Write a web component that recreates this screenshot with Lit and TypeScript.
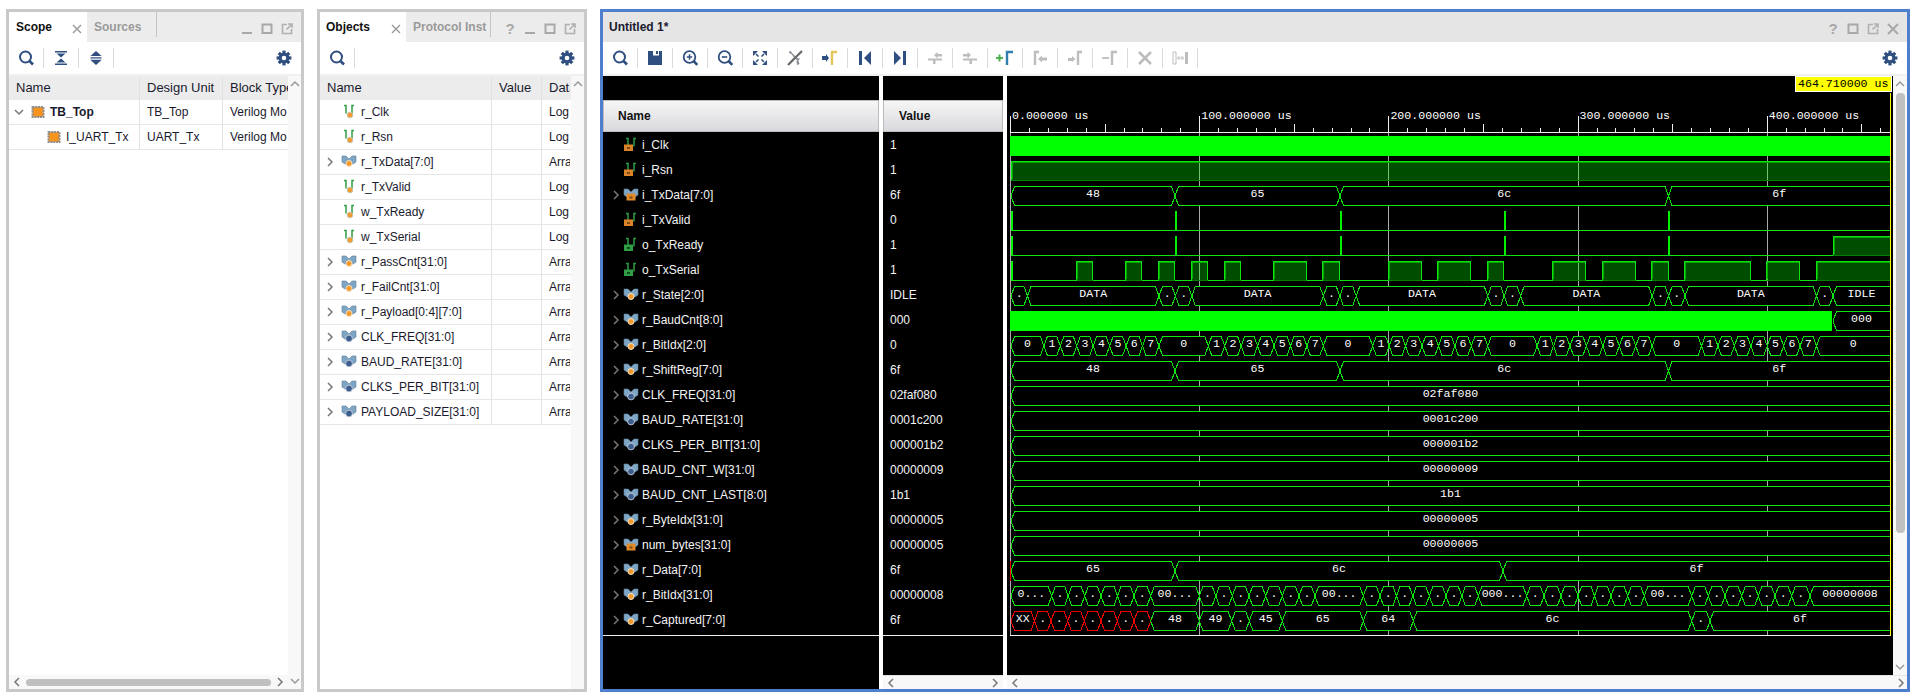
import { LitElement, css, html, svg } from "lit";
import { customElement } from "lit/decorators.js";

type Seg = [number, string];
type Kind = "log" | "arr" | "con" | "in" | "inarr" | "out" | "chip";

const NAVY = "#2f4f80";
const GREY = "#bdbdbd";
const GREEN = "#10e410";

const icon = (body: unknown, size = 20) =>
  html`<svg width=${size} height=${size} viewBox="0 0 20 20" fill="none">${body}</svg>`;

const search = svg`<circle cx="9.5" cy="9" r="5.5" stroke=${NAVY} stroke-width="2"/><path d="M13.5 13l3.5 3.5" stroke=${NAVY} stroke-width="2.6"/>`;

const gear = () => {
  const teeth = [0, 45, 90, 135, 180, 225, 270, 315].map(
    (a) => svg`<rect x="8.4" y="2.6" width="3.2" height="4" fill=${NAVY} transform="rotate(${a} 10 10)"/>`
  );
  return icon(svg`${teeth}<circle cx="10" cy="10" r="5.4" fill=${NAVY}/><circle cx="10" cy="10" r="2.3" fill="#fff"/>`);
};

const tools: Record<string, unknown> = {
  search,
  collapse: svg`<path d="M4 3h12v1.6H4zM4 15.4h12V17H4zM10 9.5L5.5 5.5h9zM10 10.5l4.5 4h-9z" fill=${NAVY}/>`,
  expand: svg`<path d="M10 3l5.5 5h-11zM10 17l-5.5-5h11zM4.5 9h11v.8h-11zM4.5 10.4h11v.8h-11z" fill=${NAVY}/>`,
  save: svg`<path d="M3 3h14v14H3z" fill=${NAVY}/><rect x="8" y="3" width="6" height="4.5" fill="#fff"/><rect x="11" y="3" width="2" height="3" fill=${NAVY}/>`,
  zoomIn: svg`<circle cx="9.5" cy="9" r="5.8" stroke=${NAVY} stroke-width="1.8"/><path d="M13.5 13l3.8 3.8" stroke=${NAVY} stroke-width="2.6"/><path d="M6.8 9h5.4M9.5 6.3v5.4" stroke=${NAVY} stroke-width="1.5"/>`,
  zoomOut: svg`<circle cx="9.5" cy="9" r="5.8" stroke=${NAVY} stroke-width="1.8"/><path d="M13.5 13l3.8 3.8" stroke=${NAVY} stroke-width="2.6"/><path d="M6.8 9h5.4" stroke=${NAVY} stroke-width="1.6"/>`,
  fit: svg`<path d="M3 3h5L3 8zM17 3v5l-5-5zM3 17v-5l5 5zM17 17h-5l5-5z" fill=${NAVY}/><path d="M6 6l2.5 2.5M14 6l-2.5 2.5M6 14l2.5-2.5M14 14l-2.5-2.5" stroke=${NAVY} stroke-width="1.5"/>`,
  swap: svg`<path d="M4 4c4 2 8 6 10 12M4 16l4-5M5 3l5 7 4 1-2 3 1 3" stroke="#8a8f99" stroke-width="1.2"/><path d="M3 17L17 3" stroke="#666" stroke-width="2.2"/>`,
  goCursor: svg`<path d="M2 8h4V6l3 4-3 4v-2H2z" fill=${NAVY}/><path d="M12 17V4h5" stroke="#e3c65a" stroke-width="2.4"/>`,
  first: svg`<rect x="4" y="3" width="3" height="14" fill=${NAVY}/><path d="M16 3v14L9 10z" fill=${NAVY}/>`,
  last: svg`<rect x="13" y="3" width="3" height="14" fill=${NAVY}/><path d="M4 3v14l7-7z" fill=${NAVY}/>`,
  prevT: svg`<path d="M9 7l3.5-3v2H17v2.5h-4.5v2zM3 10.5h14v2H10.5V16H8v-3.500H3z" fill=${GREY}/>`,
  nextT: svg`<path d="M11 7L7.500 4v2H3v2.500h4.500v2zM3 10.500h14v2h-5V16H9.500v-3.500H3z" fill=${GREY}/>`,
  addM: svg`<path d="M1 10h7M4.5 6.5v7" stroke="#4caf50" stroke-width="2"/><path d="M12 17V4h6" stroke="#2f7fb0" stroke-width="2.4"/>`,
  prevM: svg`<path d="M5 17V4h4" stroke=${GREY} stroke-width="2.4"/><path d="M8 11l4-3.5v2h5v3h-5v2z" fill=${GREY}/>`,
  nextM: svg`<path d="M3 10h4V8l3.5 3L7 14v-1H3z" fill=${GREY}/><path d="M13 17V4h4" stroke=${GREY} stroke-width="2.4"/>`,
  delM: svg`<path d="M2 10h7" stroke=${GREY} stroke-width="1.8"/><path d="M12 17V4h5" stroke=${GREY} stroke-width="2.4"/>`,
  clear: svg`<path d="M4 4l12 12M16 4L4 16" stroke=${GREY} stroke-width="2.6"/>`,
  dist: svg`<path d="M3 4h3v12H3z" stroke=${GREY}/><rect x="15" y="4" width="3" height="12" fill=${GREY}/><path d="M7.5 10h6M7.5 10l2-2M7.5 10l2 2M13.5 10l-2-2M13.5 10l-2 2" stroke=${GREY}/>`,
};

const funnel = svg`<path d="M1 2h4l3 3 3-3h4v6l-3 2H4L1 8z" fill="#7ea6c4" stroke="#5e7f9c" stroke-width=".6"/>`;
const twin = (c: string) => svg`<path d="M3 1.5h2v8M11 9.5V1.5h2" stroke=${c} stroke-width="1.5"/>`;

const kinds: Record<Kind, unknown> = {
  chip: svg`<path d="M2.500 3h11v10h-11z" fill="#f7941d" stroke="#8c8c8c" stroke-width="2" stroke-dasharray="2 .8"/>`,
  log: svg`${twin("#2f9e44")}<circle cx="9" cy="11" r="2.8" fill="#f29a2e" stroke="#c9c2a8"/>`,
  arr: svg`${funnel}<circle cx="8" cy="9.5" r="3" fill="#f29a2e" stroke="#f7e3c5"/>`,
  con: svg`${funnel}<circle cx="8" cy="9.5" r="3.4" fill="#3d5f8f" stroke="#d5dce6" stroke-width=".8"/>`,
  in: svg`${twin("#2f9e44")}<rect x="1" y="7.5" width="9" height="6.5" fill="#d98428"/><rect x="4" y="10" width="3" height="2" fill="#7d4a14"/>`,
  inarr: svg`${funnel}<rect x="3.5" y="6.5" width="9" height="7" fill="#e08a2a"/><rect x="6.5" y="9.5" width="3" height="2" fill="#7d4a14"/>`,
  out: svg`${twin("#2f9e44")}<rect x="1" y="7.5" width="9" height="6.5" fill="#2f9e44"/><rect x="4" y="10" width="3" height="2" fill="#0c4d1a"/>`,
};

const kindIcon = (k: Kind) =>
  html`<svg class="ki" width="16" height="16" viewBox="0 0 16 16" fill="none">${kinds[k]}</svg>`;

const chevron = (dir: "right" | "down" | "left" | "up", c = "#777") => {
  const d = {
    right: "M3 1l4 4-4 4",
    left: "M7 1L3 5l4 4",
    down: "M1 3l4 4 4-4",
    up: "M1 7l4-4 4 4",
  }[dir];
  return html`<svg width="10" height="10" viewBox="0 0 10 10" fill="none"><path d=${d} stroke=${c} stroke-width="1.5"/></svg>`;
};

const ctrl = {
  help: html`<span class="help">?</span>`,
  min: html`<svg width="20" height="20" viewBox="0 0 20 20"><rect x="5" y="13" width="10" height="2" fill="#a8a8a8"/></svg>`,
  max: html`<svg width="20" height="20" viewBox="0 0 20 20" fill="none"><rect x="5.5" y="5.5" width="9" height="8.5" stroke="#a8a8a8" stroke-width="2"/></svg>`,
  pop: html`<svg width="20" height="20" viewBox="0 0 20 20" fill="none"><path d="M10 5.500H5.500V14.500H14.500V10M9.500 10.500L14.500 5.500M11 5h4v4" stroke="#b0b0b0" stroke-width="1.6"/></svg>`,
  close: html`<svg width="20" height="20" viewBox="0 0 20 20" fill="none"><path d="M5 5l10 10M15 5L5 15" stroke="#a8a8a8" stroke-width="2"/></svg>`,
};

const closeTab = html`<svg width="10" height="10" viewBox="0 0 10 10"><path d="M1 1l8 8M9 1L1 9" stroke="#999" stroke-width="1.4"/></svg>`;

const objects: [string, Kind, string][] = [
  ["r_Clk", "log", "Log"],
  ["r_Rsn", "log", "Log"],
  ["r_TxData[7:0]", "arr", "Arra"],
  ["r_TxValid", "log", "Log"],
  ["w_TxReady", "log", "Log"],
  ["w_TxSerial", "log", "Log"],
  ["r_PassCnt[31:0]", "arr", "Arra"],
  ["r_FailCnt[31:0]", "arr", "Arra"],
  ["r_Payload[0:4][7:0]", "arr", "Arra"],
  ["CLK_FREQ[31:0]", "con", "Arra"],
  ["BAUD_RATE[31:0]", "con", "Arra"],
  ["CLKS_PER_BIT[31:0]", "con", "Arra"],
  ["PAYLOAD_SIZE[31:0]", "con", "Arra"],
];

const signals: [string, Kind, string][] = [
  ["i_Clk", "in", "1"],
  ["i_Rsn", "in", "1"],
  ["i_TxData[7:0]", "inarr", "6f"],
  ["i_TxValid", "in", "0"],
  ["o_TxReady", "out", "1"],
  ["o_TxSerial", "out", "1"],
  ["r_State[2:0]", "arr", "IDLE"],
  ["r_BaudCnt[8:0]", "arr", "000"],
  ["r_BitIdx[2:0]", "arr", "0"],
  ["r_ShiftReg[7:0]", "arr", "6f"],
  ["CLK_FREQ[31:0]", "con", "02faf080"],
  ["BAUD_RATE[31:0]", "con", "0001c200"],
  ["CLKS_PER_BIT[31:0]", "con", "000001b2"],
  ["BAUD_CNT_W[31:0]", "con", "00000009"],
  ["BAUD_CNT_LAST[8:0]", "con", "1b1"],
  ["r_ByteIdx[31:0]", "arr", "00000005"],
  ["num_bytes[31:0]", "inarr", "00000005"],
  ["r_Data[7:0]", "arr", "6f"],
  ["r_BitIdx[31:0]", "arr", "00000008"],
  ["r_Captured[7:0]", "arr", "6f"],
];

// waveform geometry, in page pixels
const X0 = 1011;
const XE = 1890;
const BIT = 16.44;
const FRAME = 164.4;
const rowTop = (i: number) => 136 + i * 25;
const frames = [0, 1, 2, 3, 4].map((k) => X0 + k * FRAME);

const bytes: Seg[] = [[X0, "48"], [1175, "65"], [1340, "6c"], [1668.5, "6f"]];

const stateSegs = (): Seg[] => {
  const out: Seg[] = [];
  frames.forEach((f) => {
    out.push([f, "."], [f + BIT, "DATA"], [f + 9 * BIT, "."]);
  });
  out.push([1833, "IDLE"]);
  return out;
};

const bitSegs = (): Seg[] => {
  const out: Seg[] = [[X0, "0"]];
  frames.forEach((f) => {
    for (let i = 0; i < 7; i++) out.push([f + 2 * BIT + i * BIT, String(i + 1)]);
    out.push([f + 9 * BIT, "0"]);
  });
  return out;
};

const dots = (xs: number[]): Seg[] => xs.map((x) => [x, "."] as Seg);

const idxSegs: Seg[] = [
  [X0, "0..."],
  ...dots([1051.7, 1068.2, 1084.7, 1101, 1117.5, 1134]),
  [1150.7, "00..."],
  ...dots([1199.3, 1215.8, 1232.3, 1249, 1265.7, 1282.3, 1299]),
  [1315, "00..."],
  ...dots([1363.3, 1380, 1396.5, 1412.8, 1429.3, 1446, 1461.8]),
  [1478.3, "000..."],
  ...dots([1526.7, 1544, 1561, 1578, 1594.5, 1611, 1627.7]),
  [1644.3, "00..."],
  ...dots([1691.7, 1708.3, 1725, 1741.7, 1758.3, 1775, 1791.7]),
  [1810, "00000008"],
];

const capSegs: Seg[] = [
  [X0, "XX"],
  ...dots([1034.5, 1051, 1067.7, 1084.3, 1101, 1117.3, 1134]),
  [1150.7, "48"],
  [1199.3, "49"],
  [1231.7, "."],
  [1249.3, "45"],
  [1282.3, "65"],
  [1363.3, "64"],
  [1413.3, "6c"],
  [1691.7, "."],
  [1710, "6f"],
];

const serialHigh: [number, number][] = [
  [1076.5, 1092.5], [1125.5, 1141.5], [1158.5, 1174.5], [1191.5, 1207.5], [1224.5, 1240.5],
  [1273.5, 1306.5], [1322.5, 1339.5], [1388.5, 1421.5], [1437.5, 1470.5], [1487.5, 1503.5],
  [1552.5, 1585.5], [1602.5, 1635.5], [1651.5, 1668.5], [1684.5, 1750.5], [1766.5, 1799.5],
  [1816.5, 1895],
];

const pulses = [1011.5, 1175.5, 1340.5, 1504.5, 1668.5];

const hexes = (row: number, segs: Seg[], redUntil = 0) => {
  const t = rowTop(row) + 0.5;
  const b = t + 19;
  const m = t + 9.5;
  const s = 3.5;
  return segs.map(([x0, label], i) => {
    const x1 = i + 1 < segs.length ? segs[i + 1][0] : XE + 8;
    const c = i < redUntil ? "#f00000" : GREEN;
    const cx = i + 1 < segs.length ? (x0 + x1) / 2 : (x0 + XE) / 2;
    return svg`<polygon class="bus" stroke=${c}
        points="${x0},${m} ${x0 + s},${t} ${x1 - s},${t} ${x1},${m} ${x1 - s},${b} ${x0 + s},${b}"/>
      <text class="val" x=${cx} y=${rowTop(row) + 11} text-anchor="middle">${label}</text>`;
  });
};

const high = (x0: number, x1: number, row: number) => {
  const t = rowTop(row);
  return svg`<rect class="hi" x=${x0} y=${t} width=${x1 - x0} height="19"/>
    <path class="edge" d="M${x0} ${t + 19}V${t + 0.5}H${x1}V${t + 19}"/>
    <path class="edge2" d="M${x0 + 1} ${t + 18}V${t + 1.5}H${x1 - 1}"/>
    <path class="low2" d="M${x0} ${t + 19.5}H${x1}"/>`;
};

const baseline = (row: number) =>
  svg`<path class="edge" d="M${X0} ${rowTop(row) + 19.5}H${XE}"/>`;

const stick = (x: number, row: number) =>
  svg`<rect x=${x - 0.5} y=${rowTop(row)} width="2" height="19" fill="#00f000"/>`;

@customElement("wave-view")
export class WaveView extends LitElement {
  render() {
    const majors = [0, 1, 2, 3, 4].map((k) => 1010.5 + k * 189.2);
    const minors: number[] = [];
    for (let i = 1; i * 18.92 < 878; i++) if (i % 10) minors.push(i);

    return html`<svg width="886" height="599" viewBox="1007 76 886 599">
      <defs><clipPath id="w"><rect x="1010" y="100" width="881" height="560"/></clipPath></defs>
      <rect x="1007" y="76" width="886" height="599" fill="#000"/>

      <!-- time axis -->
      <path class="axis" d="M1010 132.5H1890"/>
      ${majors.map(
        (x, k) => svg`<path class="axis" d="M${x} 116V132"/>
          <path class="grid" d="M${x} 133V635"/>
          <text class="val" x=${x + 1.5} y="119">${k * 100 === 0 ? "0.000000" : `${k * 100}.000000`} us</text>`
      )}
      ${minors.map((i) => {
        const x = Math.round(1010 + i * 18.92) + 0.5;
        return svg`<path class="axis" d="M${x} ${i % 5 ? 128 : 124}V132"/>`;
      })}
      <path class="axis" d="M1010 635.5H1890"/>

      <g clip-path="url(#w)">
        <rect x=${X0 - 1} y="136" width=${XE - X0 + 1} height="20" fill="#00ff00"/>
        ${high(X0, XE + 3, 1)}
        ${hexes(2, bytes)}
        ${baseline(3)}${pulses.map((x) => stick(x, 3))}
        ${baseline(4)}${pulses.map((x) => stick(x, 4))}${high(1833, XE + 3, 4)}
        ${baseline(5)}${stick(1011.5, 5)}${serialHigh.map(([a, b]) => high(a, b, 5))}
        ${hexes(6, stateSegs())}
        <rect x=${X0 - 1} y="311" width="822" height="20" fill="#00ff00"/>
        ${hexes(7, [[1833, "000"]])}
        ${hexes(8, bitSegs())}
        ${hexes(9, bytes)}
        ${hexes(10, [[X0, "02faf080"]])}
        ${hexes(11, [[X0, "0001c200"]])}
        ${hexes(12, [[X0, "000001b2"]])}
        ${hexes(13, [[X0, "00000009"]])}
        ${hexes(14, [[X0, "1b1"]])}
        ${hexes(15, [[X0, "00000005"]])}
        ${hexes(16, [[X0, "00000005"]])}
        ${hexes(17, [[X0, "65"], [1175, "6c"], [1503, "6f"]])}
        <path d="M1010.5 561V581" stroke="#f00000"/>
        ${hexes(18, idxSegs)}
        ${hexes(19, capSegs, 8)}
      </g>

      <!-- cursor -->
      <path d="M1890.5 93V636" stroke="#ffff00"/>
      <rect x="1795.5" y="76.5" width="96" height="15" fill="#ffff00" stroke="#fff"/>
      <text class="tag" x="1798" y="87">464.710000 us</text>
    </svg>`;
  }

  static styles = css`
    :host {
      display: block;
      width: 886px;
      height: 599px;
    }

    svg {
      display: block;
      shape-rendering: crispEdges;
    }

    .axis {
      stroke: #eee;
      fill: none;
    }

    .grid {
      stroke: #a8a8a8;
      fill: none;
    }

    .val,
    .tag {
      font-family: "Liberation Mono", monospace;
      font-size: 11.6px;
      fill: #fff;
    }

    .tag {
      fill: #000;
    }

    .bus {
      fill: #000;
      stroke-width: 1;
    }

    .hi {
      fill: #00ff00;
      fill-opacity: 0.3;
    }

    .edge {
      fill: none;
      stroke: #10e410;
    }

    .edge2 {
      fill: none;
      stroke: #00a800;
    }

    .low2 {
      fill: none;
      stroke: #008000;
    }
  `;
}

@customElement("app-root")
export class AppRoot extends LitElement {
  private hscroll() {
    return html`<div class="hbar h1">
      ${chevron("left")}<span class="thumb"></span>${chevron("right")}
    </div>`;
  }

  private vscroll(thumb = false, down = true) {
    return html`<div class="vbar">
      ${chevron("up", "#999")}
      ${thumb ? html`<span class="vthumb"></span>` : html`<span class="grow"></span>`}
      ${down ? chevron("down", "#999") : ""}
    </div>`;
  }

  private tree(name: string, kind: Kind, open: "none" | "right" | "down", extra = "") {
    return html`<div class="tree ${extra}">
      <span class="arrow">${open === "none" ? "" : chevron(open)}</span>
      ${kindIcon(kind)}
      <span class="label">${name}</span>
    </div>`;
  }

  private scopePanel() {
    return html`<section class="panel scope">
      <header class="tabs">
        <div class="tab on">Scope ${closeTab}</div>
        <div class="tab off">Sources</div>
        <span class="grow"></span>
        ${ctrl.min}${ctrl.max}${ctrl.pop}
      </header>
      <div class="toolbar">
        <span class="btn">${icon(tools.search)}</span>
        <span class="btn">${icon(tools.collapse)}</span>
        <span class="btn">${icon(tools.expand)}</span>
        <span class="grow"></span>
        <span class="gear">${gear()}</span>
      </div>
      <div class="body">
        <div class="main">
          <div class="table">
            <div class="row head"><span class="c1">Name</span><span class="c2">Design Unit</span><span class="c3">Block Type</span></div>
            <div class="row">
              <span class="c1 bold">${this.tree("TB_Top", "chip", "down")}</span>
              <span class="c2">TB_Top</span><span class="c3">Verilog Mo</span>
            </div>
            <div class="row">
              <span class="c1">${this.tree("I_UART_Tx", "chip", "none", "lv2")}</span>
              <span class="c2">UART_Tx</span><span class="c3">Verilog Mo</span>
            </div>
          </div>
          ${this.hscroll()}
        </div>
        ${this.vscroll()}
      </div>
    </section>`;
  }

  private objectsPanel() {
    return html`<section class="panel objs">
      <header class="tabs">
        <div class="tab on">Objects ${closeTab}</div>
        <div class="tab off">Protocol Inst</div>
        <span class="grow"></span>
        ${ctrl.help}${ctrl.min}${ctrl.max}${ctrl.pop}
      </header>
      <div class="toolbar">
        <span class="btn">${icon(tools.search)}</span>
        <span class="grow"></span>
        <span class="gear">${gear()}</span>
      </div>
      <div class="body">
        <div class="main">
          <div class="table">
            <div class="row head"><span class="c1">Name</span><span class="c2">Value</span><span class="c3">Data</span></div>
            ${objects.map(
              ([n, k, t]) => html`<div class="row">
                <span class="c1">${this.tree(n, k, k === "log" ? "none" : "right")}</span>
                <span class="c2"></span><span class="c3">${t}</span>
              </div>`
            )}
          </div>
        </div>
        ${this.vscroll(false, false)}
      </div>
    </section>`;
  }

  private wavePanel() {
    const tb = ["search", "save", "zoomIn", "zoomOut", "fit", "swap", "goCursor", "first", "last", "prevT", "nextT", "addM", "prevM", "nextM", "delM", "clear", "dist"];
    return html`<section class="panel wave">
      <header class="tabs title">
        <div class="ttl">Untitled 1*</div>
        <span class="grow"></span>
        ${ctrl.help}${ctrl.max}${ctrl.pop}${ctrl.close}
      </header>
      <div class="toolbar">
        ${tb.map((t) => html`<span class="btn">${icon(tools[t])}</span>`)}
        <span class="grow"></span>
        <span class="gear">${gear()}</span>
      </div>
      <div class="body wbody">
        <div class="wcol names">
          <div class="whead">Name</div>
          <div class="wrows">
            ${signals.map(([n, k]) => html`<div class="wrow">${this.tree(n, k, k === "in" || k === "out" ? "none" : "right", "wt")}</div>`)}
          </div>
        </div>
        <div class="wcol values">
          <div class="whead">Value</div>
          <div class="wrows">
            ${signals.map((s) => html`<div class="wrow">${s[2]}</div>`)}
          </div>
          <span class="grow"></span>
          <div class="hbar plain">${chevron("left")}${chevron("right")}</div>
        </div>
        <div class="plot">
          <div class="plotrow">
            <wave-view></wave-view>
            ${this.vscroll(true)}
          </div>
          <div class="hbar plain lastbar">${chevron("left")}${chevron("right")}</div>
        </div>
      </div>
    </section>`;
  }

  render() {
    return html`${this.scopePanel()}${this.objectsPanel()}${this.wavePanel()}`;
  }

  static styles = css`
    :host {
      display: flex;
      gap: 13px;
      width: 1920px;
      height: 700px;
      box-sizing: border-box;
      padding: 9px 10px 8px 6px;
      background: white;
      font-family: "Liberation Sans", Arial, sans-serif;
      font-size: 12px;
      color: #1a1a2e;
    }

    .grow {
      flex: 1;
    }

    .panel {
      display: flex;
      flex-direction: column;
      box-sizing: border-box;
      height: 683px;
      border: 3px solid #c9c9c9;
      background: white;
    }

    .scope {
      width: 298px;
    }

    .objs {
      width: 270px;
    }

    .wave {
      width: 1310px;
      border-color: #4e7fcf;
    }

    .tabs {
      display: flex;
      align-items: center;
      flex: none;
      height: 30px;
      padding-right: 4px;
      background: #ececec;
    }

    .tabs > svg {
      margin-top: 3px;
    }

    .tabs.title {
      background: #e5e5e5;
    }

    .ttl {
      padding-left: 6px;
      font-weight: bold;
    }

    .tab {
      display: flex;
      align-items: center;
      box-sizing: border-box;
      height: 30px;
      font-weight: bold;
    }

    .tab.on {
      justify-content: space-between;
      padding: 0 5px 0 7px;
      background: white;
      color: #111;
    }

    .tab.on svg {
      margin-top: 3px;
    }

    .scope .tab.on {
      width: 78px;
    }

    .objs .tab.on {
      width: 86px;
      padding-left: 6px;
    }

    .tab.off {
      height: 25px;
      margin-bottom: 5px;
      padding: 5px 0 0 7px;
      color: #9a9a9a;
      border-right: 1px solid #c4c4c4;
    }

    .scope .tab.off {
      width: 70px;
    }

    .objs .tab.off {
      width: 85px;
    }

    .help {
      width: 20px;
      text-align: center;
      color: #a8a8a8;
      font-size: 15px;
      font-weight: bold;
      margin-top: 3px;
    }

    .toolbar {
      display: flex;
      align-items: center;
      flex: none;
      height: 32px;
      border-bottom: 2px solid #f0f0f0;
      box-sizing: content-box;
    }

    .btn {
      display: flex;
      align-items: center;
      justify-content: center;
      box-sizing: border-box;
      width: 35px;
      height: 20px;
      border-right: 1px solid #dcdcdc;
    }

    .gear {
      display: flex;
      margin-right: 7px;
    }

    .body {
      display: flex;
      flex: 1;
      min-height: 0;
    }

    .main {
      display: flex;
      flex-direction: column;
      flex: 1;
      min-width: 0;
    }

    .table {
      flex: 1;
      overflow: hidden;
    }

    .row {
      display: flex;
      box-sizing: border-box;
      height: 25px;
      border-bottom: 1px solid #e6e6e6;
      line-height: 24px;
      white-space: nowrap;
    }

    .row.head {
      height: 24px;
      border: 0;
      background: #ececec;
      font-size: 13px;
    }

    .c1,
    .c2,
    .c3 {
      display: block;
      box-sizing: border-box;
      overflow: hidden;
      border-right: 1px solid #e2e2e2;
    }

    .c2,
    .c3 {
      padding-left: 7px;
    }

    .head .c1 {
      padding-left: 7px;
    }

    .c3 {
      border-right: 0;
    }

    .scope .c1 {
      width: 131px;
    }

    .scope .c2 {
      width: 83px;
    }

    .scope .c3 {
      width: 65px;
    }

    .objs .c1 {
      width: 172px;
    }

    .objs .c2 {
      width: 50px;
    }

    .objs .c3 {
      width: 28px;
      padding-left: 7px;
    }

    .bold {
      font-weight: bold;
    }

    .tree {
      display: flex;
      align-items: center;
      height: 24px;
    }

    .tree.lv2 {
      padding-left: 16px;
    }

    .arrow {
      display: flex;
      justify-content: center;
      flex: none;
      width: 20px;
    }

    .ki {
      flex: none;
      margin-right: 4px;
      width: 16px;
      height: 16px;
      margin-left: 1px;
    }

    .tree.wt {
      height: 24px;
      padding-left: 3px;
    }

    .tree.wt .ki {
      margin: 0 3px 0 -3px;
    }

    .hbar {
      display: flex;
      align-items: center;
      justify-content: space-between;
      flex: none;
      box-sizing: border-box;
      height: 14px;
      padding: 0 3px;
      background: #f8f8f8;
    }

    .h1 .thumb {
      flex: 1;
      height: 7px;
      margin: 0 4px;
      border-radius: 4px;
      background: #c0c0c0;
    }

    .hbar.plain {
      border-top: 1px solid #e4e4e4;
    }

    .vbar {
      display: flex;
      flex-direction: column;
      align-items: center;
      flex: none;
      box-sizing: border-box;
      width: 13px;
      padding: 3px 0;
      background: #f8f8f8;
    }

    .vthumb {
      flex: none;
      width: 9px;
      height: 440px;
      margin: 4px 0 auto;
      border-radius: 4px;
      background: #c0c0c0;
    }

    .wbody {
      gap: 4px;
    }

    .wcol {
      display: flex;
      flex-direction: column;
      flex: none;
      padding-top: 24px;
      background: #000;
      color: #f4f4f4;
    }

    .names {
      width: 276px;
    }

    .values {
      width: 120px;
    }

    .whead {
      flex: none;
      box-sizing: border-box;
      height: 32px;
      padding-left: 14px;
      border: 1px solid #bcbcbc;
      background: linear-gradient(#f6f6f6, #d9d9de);
      color: #111;
      font-weight: bold;
      line-height: 30px;
    }

    .values .whead {
      padding-left: 15px;
    }

    .wrows {
      flex: none;
      box-sizing: content-box;
      height: 503px;
      border-bottom: 1px solid #eee;
    }

    .wrow {
      box-sizing: border-box;
      height: 25px;
      padding-top: 1px;
      line-height: 24px;
    }

    .values .wrow {
      padding-left: 7px;
    }

    .plot {
      display: flex;
      flex-direction: column;
      flex: 1;
      min-width: 0;
    }

    .plotrow {
      display: flex;
      flex: 1;
      min-height: 0;
    }

    .plotrow .vbar {
      width: 14px;
    }

    .lastbar {
      padding-right: 1px;
    }
  `;
}
